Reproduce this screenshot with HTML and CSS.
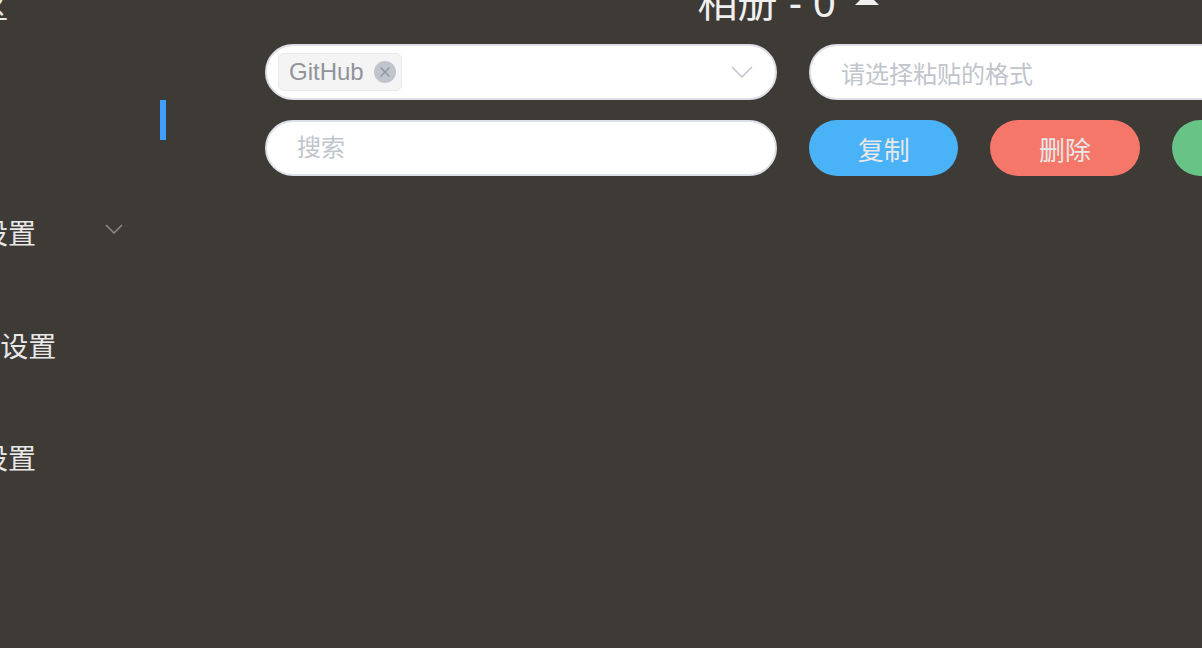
FILE: index.html
```html
<!DOCTYPE html>
<html lang="zh">
<head>
<meta charset="utf-8">
<title>相册</title>
<link rel="stylesheet" href="styles.css">
</head>
<body>
<div class="app">
  <aside class="sidebar">
    <div class="menu-item">上传区</div>
    <div class="menu-item is-active"><span>相册</span><span class="indicator"></span></div>
    <div class="menu-item"><span>图床设置</span>
      <svg class="menu-arrow" viewBox="0 0 18 10"><polyline points="1,1 9,9 17,1"/></svg>
    </div>
    <div class="menu-item">PicGo设置</div>
    <div class="menu-item">插件设置</div>
  </aside>
  <main class="main">
    <h1 class="title"><span>相册 - 0</span>
      <svg class="caret" viewBox="0 0 24 12"><polygon points="12,0 24,12 0,12"/></svg>
    </h1>
    <div class="form-grid">
      <div class="select">
        <span class="tag">GitHub<span class="tag-close"><svg viewBox="0 0 12 12"><path d="M1.5 1.5 L10.5 10.5 M10.5 1.5 L1.5 10.5"/></svg></span></span>
        <svg class="select-arrow" viewBox="0 0 22 12"><polyline points="1,1 11,11 21,1"/></svg>
      </div>
      <div class="select select--placeholder">
        <span class="placeholder">请选择粘贴的格式</span>
        <svg class="select-arrow" viewBox="0 0 22 12"><polyline points="1,1 11,11 21,1"/></svg>
      </div>
      <input class="search" type="text" placeholder="搜索">
      <div class="actions">
        <button class="btn btn--blue">复制</button>
        <button class="btn btn--red">删除</button>
        <button class="btn btn--green">同步</button>
      </div>
    </div>
  </main>
</div>
</body>
</html>
```

FILE: styles.css
```css
html, body {
  margin: 0;
  height: 100%;
  overflow: hidden;
  background: #3e3a36;
  font-family: "Liberation Sans", "Noto Sans CJK SC", sans-serif;
}

.app {
  display: flex;
  align-items: flex-start;
  margin-left: -100px;
  width: max-content;
}

/* sidebar */
.sidebar {
  flex: none;
  width: 266px;
  margin-top: -49px;
}

.menu-item {
  height: 112.5px;
  display: flex;
  align-items: center;
  padding-left: 24px;
  font-size: 28px;
  color: #e8e8e8;
  white-space: nowrap;
}

.indicator {
  width: 6px;
  height: 40px;
  margin-left: auto;
  background: #409eff;
}

.menu-arrow {
  width: 18px;
  height: 10px;
  margin-left: auto;
  margin-right: 43px;
  margin-top: -6px;
  fill: none;
  stroke: #8d8b88;
  stroke-width: 1.5;
}

/* main */
.main {
  flex: none;
  width: 1056px;
  padding: 0 99px;
  margin-top: -17px;
}

.title {
  margin: 0 0 21px;
  padding-right: 9px;
  height: 40px;
  display: flex;
  align-items: center;
  justify-content: center;
  gap: 20px;
  font-size: 40px;
  line-height: 40px;
  font-weight: normal;
  color: #f0f0f0;
}

.caret {
  width: 24px;
  height: 12px;
  margin-top: -8px;
  fill: #f0f0f0;
}

.form-grid {
  display: grid;
  grid-template-columns: 512px 512px;
  gap: 20px 32px;
}

.select,
.search {
  height: 56px;
  box-sizing: border-box;
  border: 2px solid #dcdfe6;
  border-radius: 28px;
  background: #fff;
}

.select {
  display: flex;
  align-items: center;
  padding: 0 22px 0 11px;
}

.select--placeholder {
  padding-left: 30px;
}

.tag {
  height: 38px;
  box-sizing: border-box;
  display: flex;
  align-items: center;
  gap: 10px;
  padding: 0 5px 0 10px;
  border: 1px solid #e9e9eb;
  border-radius: 6px;
  background: #f4f4f5;
  color: #909399;
  font-size: 24px;
}

.tag-close {
  width: 22px;
  height: 22px;
  border-radius: 50%;
  background: #c0c4cc;
  display: flex;
  align-items: center;
  justify-content: center;
}

.tag-close svg {
  width: 12px;
  height: 12px;
  stroke: #8e9199;
  stroke-width: 1.3;
}

.select-arrow {
  width: 22px;
  height: 12px;
  margin-left: auto;
  fill: none;
  stroke: #c0c4cc;
  stroke-width: 1.5;
}

.placeholder {
  color: #c0c4cc;
  font-size: 24px;
  white-space: nowrap;
}

.search {
  width: 100%;
  padding: 0 30px;
  font-family: inherit;
  font-size: 24px;
  color: #606266;
  outline: none;
}

.search::placeholder {
  color: #c0c4cc;
}

.actions {
  display: grid;
  grid-template-columns: repeat(3, 1fr);
  gap: 32px;
}

.btn {
  height: 56px;
  border: none;
  border-radius: 28px;
  font-family: inherit;
  font-size: 26px;
  color: #e8e8e8;
  padding: 0;
}

.btn--blue { background: #4ab2f6; }
.btn--red { background: #f5776a; }
.btn--green { background: #67c386; }
```
